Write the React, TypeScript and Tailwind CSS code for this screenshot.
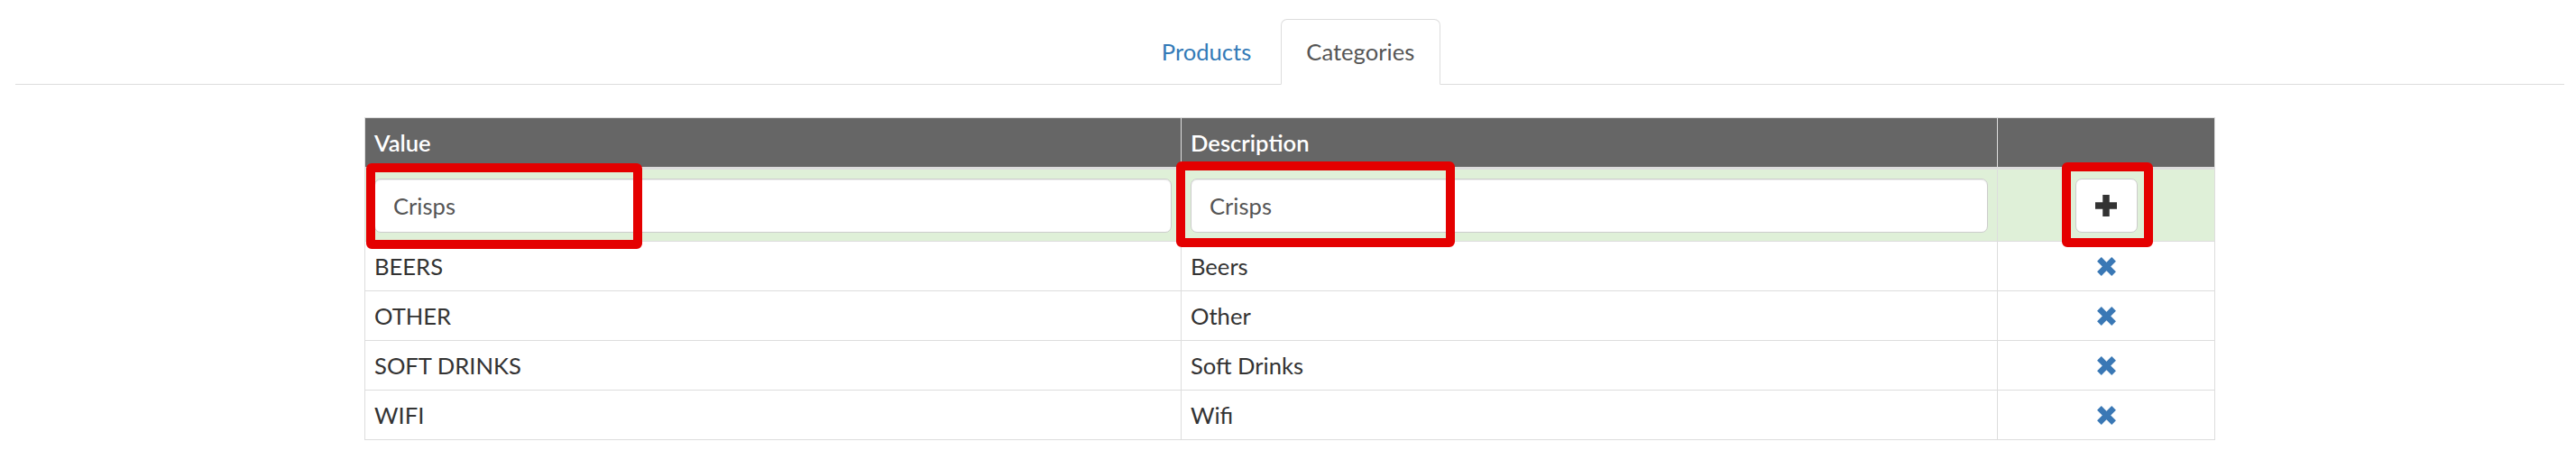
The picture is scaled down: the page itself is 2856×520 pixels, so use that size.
import React from "react";

const rows = [
  { value: "BEERS", desc: "Beers" },
  { value: "OTHER", desc: "Other" },
  { value: "SOFT DRINKS", desc: "Soft Drinks" },
  { value: "WIFI", desc: "Wifi" },
];

function RemoveIcon() {
  return (
    <svg width="21" height="21" viewBox="0 0 21 21" aria-hidden="true">
      <line x1="2.4" y1="2.4" x2="18.6" y2="18.6" stroke="#3a78b5" strokeWidth="6.6" />
      <line x1="18.6" y1="2.4" x2="2.4" y2="18.6" stroke="#3a78b5" strokeWidth="6.6" />
    </svg>
  );
}

function PlusIcon() {
  return (
    <svg width="24" height="24" viewBox="0 0 24 24" aria-hidden="true">
      <rect x="0" y="8.25" width="24" height="7.5" fill="#333" />
      <rect x="8.25" y="0" width="7.5" height="24" fill="#333" />
    </svg>
  );
}

export default function App() {
  return (
    <div className="relative w-[2856px] h-[520px] bg-white pl-[17px] pr-[13px] pt-[21px] font-['Lato','Liberation_Sans',sans-serif] text-[25.6px] text-[#333] overflow-hidden">
      <ul className="flex justify-center border-b border-[#ddd] pr-[4px]">
        <li className="-mb-px mr-[4px]">
          <a className="flex h-[73px] items-center px-[27.5px] border border-transparent rounded-t-[7px] text-[#337ab7] leading-[36.6px]">
            Products
          </a>
        </li>
        <li className="-mb-px">
          <a className="flex h-[73px] items-center px-[27.5px] border border-[#ddd] border-b-transparent rounded-t-[7px] bg-white text-[#555] leading-[36.6px]">
            Categories
          </a>
        </li>
      </ul>

      <div className="mx-auto mt-[36px] w-[2052px] border border-[#ddd]">
        <div className="flex h-[57px] bg-[#666] border-b-[3px] border-[#ddd] font-semibold text-white">
          <div className="flex w-[905px] items-center border-r border-[#ddd] pl-[10px]">Value</div>
          <div className="flex w-[905px] items-center border-r border-[#ddd] pl-[10px]">Description</div>
          <div className="flex-1" />
        </div>

        <div className="flex h-[79px] bg-[#dff0d8]">
          <div className="flex w-[905px] items-center border-r border-[#ddd] px-[10px]">
            <input
              readOnly
              value="Crisps"
              className="h-[60px] w-full rounded-[7px] border border-[#ccc] bg-white px-[20px] text-[25.6px] text-[#555] shadow-[inset_0_1px_1px_rgba(0,0,0,0.075)] outline-none font-['Lato','Liberation_Sans',sans-serif]"
            />
          </div>
          <div className="flex w-[905px] items-center border-r border-[#ddd] px-[10px]">
            <input
              readOnly
              value="Crisps"
              className="h-[60px] w-full rounded-[7px] border border-[#ccc] bg-white px-[20px] text-[25.6px] text-[#555] shadow-[inset_0_1px_1px_rgba(0,0,0,0.075)] outline-none font-['Lato','Liberation_Sans',sans-serif]"
            />
          </div>
          <div className="flex flex-1 items-center justify-center">
            <button className="flex h-[60px] w-[69px] items-center justify-center rounded-[7px] border border-[#ccc] bg-white">
              <PlusIcon />
            </button>
          </div>
        </div>

        {rows.map((r) => (
          <div key={r.value} className="flex h-[55px] border-t border-[#ddd]">
            <div className="flex w-[905px] items-center border-r border-[#ddd] pl-[10px]">{r.value}</div>
            <div className="flex w-[905px] items-center border-r border-[#ddd] pl-[10px]">{r.desc}</div>
            <div className="flex flex-1 items-center justify-center">
              <RemoveIcon />
            </div>
          </div>
        ))}
      </div>

      <div className="absolute left-[406px] top-[181px] h-[95px] w-[306px] rounded-[6px] border-[10px] border-[#e40000]" />
      <div className="absolute left-[1304px] top-[179px] h-[95px] w-[309px] rounded-[6px] border-[10px] border-[#e40000]" />
      <div className="absolute left-[2286px] top-[180px] h-[94px] w-[101px] rounded-[6px] border-[10px] border-[#e40000]" />
    </div>
  );
}
